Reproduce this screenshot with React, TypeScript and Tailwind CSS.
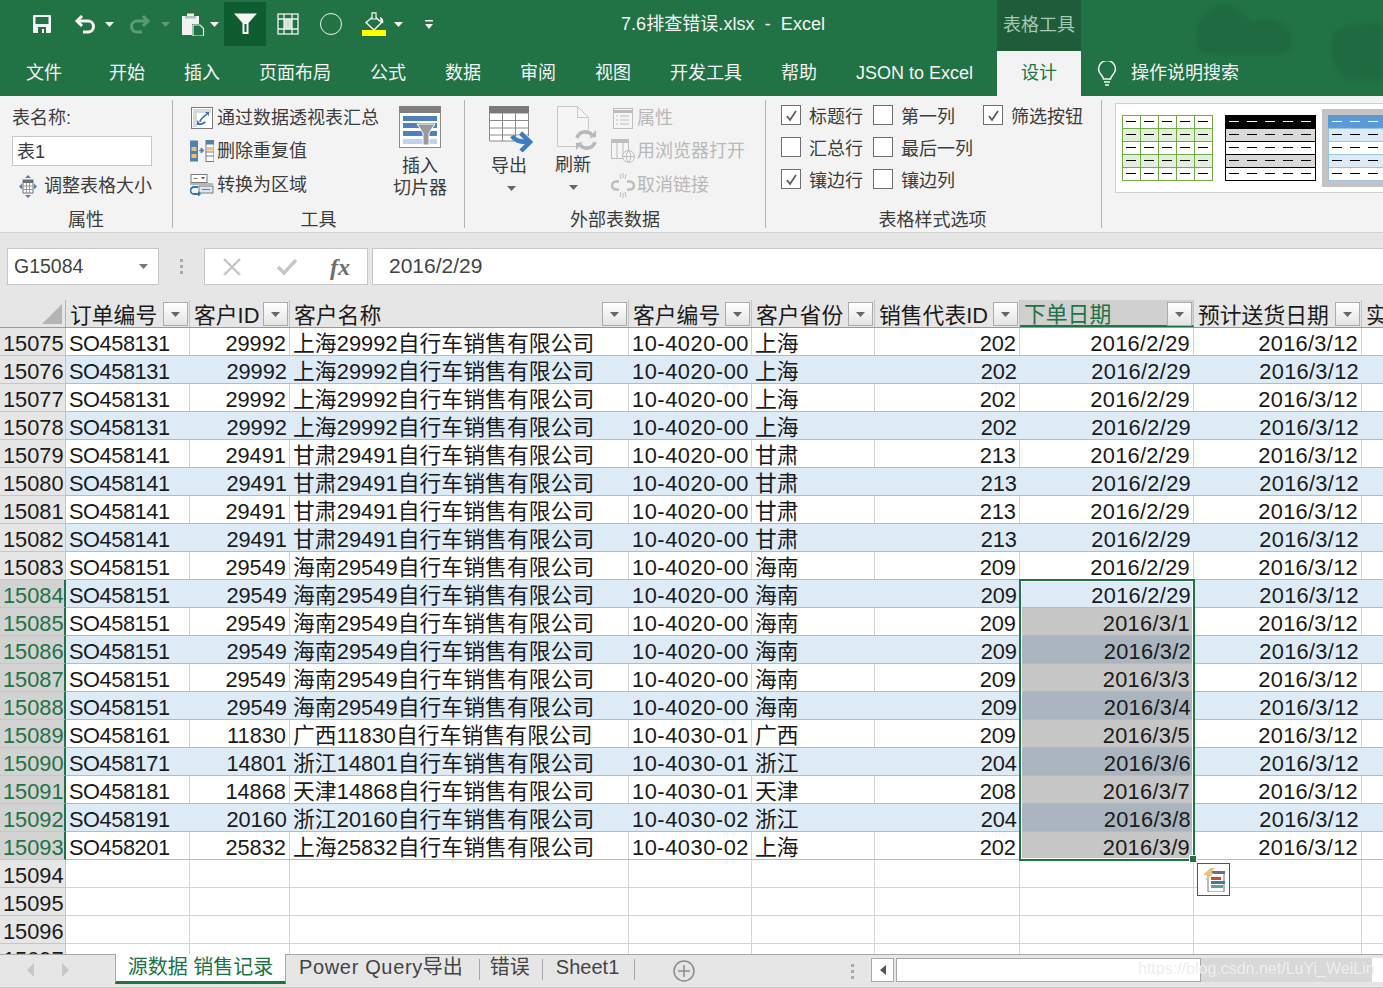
import React from 'react';

const FONT = "font-['Liberation_Sans','Noto_Sans_CJK_SC',sans-serif]";

type Row = { n: number; so: string; id: string; name: string; code: string; prov: string; rep: string; date: string };

const base: [number, string, string, string, string, string, string][] = [
  [4, 'SO458131', '29992', '上海29992自行车销售有限公司', '10-4020-00', '上海', '202'],
  [4, 'SO458141', '29491', '甘肃29491自行车销售有限公司', '10-4020-00', '甘肃', '213'],
  [6, 'SO458151', '29549', '海南29549自行车销售有限公司', '10-4020-00', '海南', '209'],
  [1, 'SO458161', '11830', '广西11830自行车销售有限公司', '10-4030-01', '广西', '209'],
  [1, 'SO458171', '14801', '浙江14801自行车销售有限公司', '10-4030-01', '浙江', '204'],
  [1, 'SO458181', '14868', '天津14868自行车销售有限公司', '10-4030-01', '天津', '208'],
  [1, 'SO458191', '20160', '浙江20160自行车销售有限公司', '10-4030-02', '浙江', '204'],
  [1, 'SO458201', '25832', '上海25832自行车销售有限公司', '10-4030-02', '上海', '202'],
];

const rows: Row[] = [];
base.forEach(([count, so, id, name, code, prov, rep]) => {
  for (let i = 0; i < count; i++) {
    const n = 15075 + rows.length;
    rows.push({ n, so, id, name, code, prov, rep, date: n <= 15084 ? '2016/2/29' : `2016/3/${n - 15084}` });
  }
});

const tabs = ['文件', '开始', '插入', '页面布局', '公式', '数据', '审阅', '视图', '开发工具', '帮助', 'JSON to Excel'];

const Caret = ({ className = '' }: { className?: string }) => (
  <svg width="9" height="5" viewBox="0 0 9 5" className={`shrink-0 ${className}`}>
    <path d="M0 0h9L4.500 5z" fill="currentColor" />
  </svg>
);

const SaveIcon = () => (
  <svg width="20" height="20" viewBox="0 0 20 20" className="block">
    <path d="M1 2a1 1 0 0 1 1-1h16a1 1 0 0 1 1 1v16a1 1 0 0 1-1 1H2a1 1 0 0 1-1-1z" fill="#f5f5f5" />
    <rect x="3.500" y="3" width="13" height="7" fill="#217346" />
    <path d="M6 13h8v6h-2v-4h-2v4H6z" fill="#217346" />
  </svg>
);

const UndoIcon = ({ color = '#f5f5f5', flip = false }: { color?: string; flip?: boolean }) => (
  <svg width="22" height="22" viewBox="0 0 22 22" fill="none" stroke={color} strokeWidth="3" className={flip ? 'block -scale-x-100' : 'block'}>
    <path d="M8 3 3 8l5 5" />
    <path d="M3 8h11a5.500 5.500 0 0 1 0 11h-5" />
  </svg>
);

const PasteIcon = () => (
  <svg width="24" height="24" viewBox="0 0 24 24" className="block">
    <path d="M1 4h5V1.500h7V4h5v8h-7v11H1z" fill="#f2f2f2" />
    <path d="M4 4h11v2.500H4z" fill="#217346" opacity=".35" />
    <path d="M12 13h7l3.500 3.500V24H12z" fill="#217346" stroke="#f2f2f2" strokeWidth="1.200" />
  </svg>
);

const FilterIcon = () => (
  <svg width="23" height="22" viewBox="0 0 23 22" fill="none" className="block">
    <path d="M0 0.500h23L14.500 10v11h-6V10z" fill="#f5f5f5" />
    <path d="M10.500 11h2v8h-2z" fill="#0f5c30" />
  </svg>
);

const FormIcon = () => (
  <svg width="22" height="22" viewBox="0 0 22 22" fill="none" stroke="#f2f2f2" strokeWidth="1.300" className="block">
    <rect x="1" y="1" width="20" height="20" />
    <path d="M1 6h20M1 16h20M7 1v20M15 1v20" />
    <path d="M7 6h8v10H7z" fill="#f2f2f2" stroke="none" opacity=".85" />
  </svg>
);

const FillIcon = () => (
  <svg width="24" height="20" viewBox="0 0 24 20" fill="none" className="block">
    <path d="M4 10.500 12 4l7.500 6.500-7.500 7.500z" stroke="#f5f5f5" strokeWidth="1.400" />
    <path d="M10 .800h4V7h-4z" fill="#217346" stroke="#f5f5f5" strokeWidth="1.200" />
    <path d="M18 5c2.500 1 4 3 3 6.500l-2.500-2.500z" fill="#f5f5f5" />
  </svg>
);

const Option = ({ label, checked = false }: { label: string; checked?: boolean }) => (
  <div className="flex h-5 items-center gap-[8px] whitespace-nowrap">
    {checked ? (
      <span className="flex h-5 w-5 shrink-0 items-center justify-center border border-[#6e6e6e] bg-white">
        <svg width="13" height="13" viewBox="0 0 13 13" fill="none" stroke="#5a5a5a" strokeWidth="1.700">
          <path d="M2 7l3 4 6-9" />
        </svg>
      </span>
    ) : (
      <span className="h-5 w-5 shrink-0 border border-[#6e6e6e] bg-white" />
    )}
    <span className="mt-[3px]">{label}</span>
  </div>
);

const PivotIcon = () => (
  <svg width="22" height="22" viewBox="0 0 22 22" fill="none" className="ml-[1px]">
    <rect x="0.500" y="0.500" width="21" height="21" fill="#fff" stroke="#7a7a7a" />
    <path d="M2 2h18v4H2zM2 6h4v14H2z" fill="#d9d9d9" />
    <path d="M9 15c0-3 3-5 7-8M6.500 16c2 2 5 1 8-1" stroke="#2f75b5" strokeWidth="1.600" />
    <path d="M14 5h4v4zM6 13v5h4z" fill="#2f75b5" />
  </svg>
);

const DedupeIcon = () => (
  <svg width="24" height="22" viewBox="0 0 24 22">
    <rect x="0" y="0.500" width="8" height="21" fill="#4f81b5" />
    <rect x="1.500" y="7" width="5" height="4" fill="#eac27d" />
    <rect x="1.500" y="14" width="5" height="4" fill="#eac27d" />
    <rect x="16" y="0.500" width="8" height="21" fill="#fff" stroke="#7a7a7a" />
    <rect x="16" y="0.500" width="8" height="4" fill="#4f81b5" />
    <rect x="17" y="7" width="6" height="3.500" fill="#eac27d" />
    <path d="M16 12h8M16 16h8" stroke="#7a7a7a" />
    <path d="M9 10.500h4M11 8l3 2.500-3 2.500z" stroke="#4f81b5" fill="#4f81b5" />
  </svg>
);

const ConvertIcon = () => (
  <svg width="24" height="22" viewBox="0 0 24 22" fill="none">
    <rect x="1" y="0.500" width="16" height="8" fill="#fff" stroke="#7a7a7a" />
    <path d="M3.500 4.500h4" stroke="#7a7a7a" />
    <path d="M11 3h4l-2 2.500z" fill="#555" />
    <path d="M0 10h23" stroke="#7a7a7a" />
    <rect x="9" y="12" width="14" height="7" fill="#dce6f1" stroke="#7a7a7a" />
    <path d="M12 15.500h8" stroke="#7a7a7a" />
    <path d="M8 13H4a3.500 3.500 0 0 0 0 7h5" stroke="#2f75b5" strokeWidth="1.800" />
    <path d="M8 17v6l3-3z" fill="#2f75b5" />
  </svg>
);

const ResizeIcon = () => (
  <svg width="18" height="23" viewBox="0 0 18 23" fill="none">
    <path d="M9 0l3 3H6zM9 23l-3-3h6zM0 11.500l3-3v6zM18 11.500l-3 3v-6z" fill="#4f81b5" />
    <rect x="4" y="5" width="10" height="13" fill="#fff" stroke="#6e6e6e" />
    <path d="M4 5h10v3H4z" fill="#6e6e6e" />
    <path d="M4 11h10M4 14.500h10M7.500 8v10M10.500 8v10" stroke="#9a9a9a" />
  </svg>
);

const SlicerIcon = () => (
  <svg width="42" height="42" viewBox="0 0 42 42" className="block">
    <rect x="0.500" y="0.500" width="41" height="41" fill="#fff" stroke="#8a8a8a" />
    <rect x="0" y="0" width="42" height="7" fill="#7f7f7f" />
    <rect x="4" y="10" width="34" height="5" fill="#4f81bd" />
    <rect x="4" y="17" width="34" height="5" fill="#4f81bd" />
    <rect x="4" y="25" width="34" height="5" fill="#4f81bd" />
    <rect x="4" y="33" width="34" height="5" fill="#c2d3e8" />
    <path d="M18 18h18l-6 9v12h-6V27z" fill="#9a9a9a" stroke="#fff" />
  </svg>
);

const ExportIcon = () => (
  <svg width="44" height="46" viewBox="0 0 44 46" fill="none" className="block">
    <path d="M.500 7h39v28H.500zM.500 14.500h39M.500 22h39M.500 29h39M13.500 7v28M26.500 7v28" stroke="#8a8a8a" fill="#fff" />
    <path d="M0 0h40v7H0z" fill="#7a7a7a" />
    <path d="M31 28c3 4 6 6 10 8-4 2-7 5-9 8" stroke="#f3f3f3" strokeWidth="8" />
    <path d="M31.500 27 41 36l-9 9" stroke="#3d7ebf" strokeWidth="4.500" />
    <path d="M23 30c3 5 9 6 16 6" stroke="#3d7ebf" strokeWidth="4.500" />
  </svg>
);

const RefreshIcon = () => (
  <svg width="40" height="45" viewBox="0 0 40 45" fill="none" className="block">
    <path d="M.500 .500h20l11 11v29H.500z" fill="#f5f5f5" stroke="#c8c8c8" />
    <path d="M20.500 .500v11h11" stroke="#c8c8c8" />
    <circle cx="29" cy="34" r="11" fill="#f3f3f3" />
    <path d="M20 32c2-7 11-8 15-3M38 36c-2 7-11 8-15 3" stroke="#b9b9b9" strokeWidth="3.600" />
    <path d="M32 32l7-1v-7zM26 36l-7 1v7z" fill="#b9b9b9" />
  </svg>
);

const PropsIcon = () => (
  <svg width="20" height="21" viewBox="0 0 20 21" fill="none" stroke="#bdbdbd">
    <rect x="0.500" y="0.500" width="19" height="20" fill="#f5f5f5" />
    <path d="M0 3.500h20" strokeWidth="3" />
    <path d="M3 8h2M3 12h2M3 16h2M7 8h9M7 12h9M7 16h9" />
  </svg>
);

const BrowserIcon = () => (
  <svg width="24" height="24" viewBox="0 0 24 24" fill="none" stroke="#bdbdbd">
    <path d="M.500 .500h17v19H.500z" fill="#f5f5f5" />
    <path d="M0 2.500h18" strokeWidth="3" />
    <path d="M6 4v15M12 4v15" />
    <circle cx="17.500" cy="17.500" r="6" fill="#f5f5f5" />
    <path d="M11.500 17.500h12M17.500 11.500c-3 4-3 8 0 12M17.500 11.500c3 4 3 8 0 12" />
  </svg>
);

const UnlinkIcon = () => (
  <svg width="24" height="25" viewBox="0 0 24 25" fill="none" stroke="#bdbdbd">
    <path d="M8 8.500H5a4 4 0 0 0 0 8h3M16 8.500h3a4 4 0 0 1 0 8h-3" strokeWidth="2.400" />
    <path d="M9 1l1 5M15 1l-1 5M12 0v5M9 24l1-5M15 24l-1-5M12 25v-5" />
  </svg>
);

const StyleThumb = ({ kind }: { kind: 'green' | 'black' | 'blue' }) => {
  const line = kind === 'green' ? '#70ad47' : kind === 'black' ? '#000' : '#9bc2e6';
  const band = kind === 'green' ? '#e2efda' : kind === 'black' ? '#d9d9d9' : '#ddebf7';
  return (
    <svg width="91" height="66" viewBox="0 0 91 66" className="block shrink-0">
      <rect x="0.500" y="0.500" width="90" height="65" fill="#fff" stroke={line} />
      {kind !== 'green' && <rect x="0" y="0" width="91" height="13.500" fill={kind === 'black' ? '#000' : '#5b9bd5'} />}
      <rect x="1" y="14" width="89" height="13" fill={band} />
      <rect x="1" y="40" width="89" height="13" fill={band} />
      {[13.500, 26.500, 39.500, 52.500].map((y) => (
        <path key={y} d={`M0 ${y}h91`} stroke={line} />
      ))}
      {kind === 'green' && [18.500, 36.500, 54.500, 72.500].map((x) => <path key={x} d={`M${x} 0v66`} stroke={line} />)}
      {[0, 1, 2, 3, 4].map((r) =>
        [4, 22, 40, 58, 76].map((x) => (
          <path key={`${r}-${x}`} d={`M${x} ${6.500 + r * 13}h10`} stroke={r === 0 && kind !== 'green' ? '#fff' : '#000'} />
        ))
      )}
    </svg>
  );
};

const HeadCell = ({ label, w, active = false }: { label: string; w: string; active?: boolean }) => (
  <div
    className={`relative flex h-full shrink-0 items-center border-r border-[#c4c4c4] pl-[4px] ${w} ${
      active ? 'border-b-2 border-b-[#217346] bg-[#d0d0d0] text-[#217346]' : ''
    }`}
  >
    <span className="mt-[4px] whitespace-nowrap">{label}</span>
    <span className="absolute right-[1px] top-[2px] flex h-[24px] w-[25px] items-center justify-center border border-[#ababab] bg-gradient-to-b from-white to-[#e4e4e4] text-[#666]">
      <Caret />
    </span>
  </div>
);

const Cell = ({ w, children, right = false, plain, extra = '' }: { w: string; children?: React.ReactNode; right?: boolean; plain: boolean; extra?: string }) => (
  <div
    className={`h-full shrink-0 overflow-hidden whitespace-nowrap ${w} ${right ? 'pr-[3px] text-right' : 'pl-[3px]'} ${
      plain ? 'border-r border-[#d4d4d4]' : ''
    } ${extra}`}
  >
    {children}
  </div>
);

export default function App() {
  return (
    <div className={`h-[988px] w-[1383px] overflow-hidden bg-[#e6e6e6] ${FONT}`}>
      <div className="relative overflow-hidden bg-[#217346]">
        {/* background art of the title bar */}
        <svg width="300" height="80" viewBox="0 0 300 80" className="absolute left-[1083px] top-0 blur-[2px]" fill="#1f6a40">
          <path d="M118 52c-14-28 8-50 28-46 12 3 18 12 24 16 20-8 36 0 38 20 1 6-3 10-8 12h-72z" />
          <path d="M250 38c4-14 24-16 50-14v56h-36c-10-8-20-24-14-42z" />
        </svg>

        {/* title bar */}
        <div className="relative flex h-[51px] items-start text-white">
          <div className="flex h-[46px] w-[620px] shrink-0 items-center pt-[2px]">
            <span className="ml-[32px]"><SaveIcon /></span>
            <span className="ml-[22px]"><UndoIcon /></span>
            <Caret className="ml-[9px] text-[#f2f2f2]" />
            <span className="ml-[15px]"><UndoIcon color="#5d9a78" flip /></span>
            <Caret className="ml-[10px] text-[#5d9a78]" />
            <span className="ml-[11px]"><PasteIcon /></span>
            <Caret className="ml-[5px] text-[#f2f2f2]" />
            <span className="ml-[5px] flex h-[44px] w-[42px] shrink-0 items-center justify-center bg-[#0f5c30]"><FilterIcon /></span>
            <span className="ml-[11px]"><FormIcon /></span>
            <span className="ml-[21px] h-[22px] w-[22px] shrink-0 rounded-full border border-[#eeeeee]" />
            <span className="ml-[20px] flex w-[24px] shrink-0 flex-col items-center">
              <FillIcon />
              <span className="-mt-[2px] h-[6px] w-[24px] bg-[#ffff00]" />
            </span>
            <Caret className="ml-[8px] text-[#f2f2f2]" />
            <svg width="8" height="9" viewBox="0 0 8 9" className="ml-[22px] shrink-0" fill="#f2f2f2">
              <path d="M0 0h8v1.500H0zM0 4h8L4 9z" />
            </svg>
          </div>
          <div className="flex h-[48px] w-[377px] shrink-0 items-center whitespace-pre pl-[1px] text-[18px] tracking-[0.05px] text-[#f4f4f4]">7.6排查错误.xlsx  -  Excel</div>
          <div className="flex h-[51px] w-[84px] shrink-0 items-center justify-center bg-[#1e5c3a] text-[18px] text-[#a3c9b3]">表格工具</div>
        </div>

        {/* ribbon tabs */}
        <div className="relative flex h-[45px] items-center pl-[26px] text-[18px] text-[#f4f4f4]">
          {tabs.map((t, i) => (
            <span key={t} className={`whitespace-nowrap ${i === 0 ? '' : i === 1 ? 'ml-[47px]' : 'ml-[39px]'}`}>
              {t}
            </span>
          ))}
          <span className="ml-[24px] flex h-full w-[84px] items-center justify-center bg-[#f3f3f3] text-[#217346]">设计</span>
          <svg width="20" height="26" viewBox="0 0 20 26" fill="none" stroke="#f4f4f4" strokeWidth="1.500" className="ml-[16px]">
            <path d="M6.500 18c0-3-5-5-5-10a8.500 8.500 0 0 1 17 0c0 5-5 7-5 10zM7 21h6M8 24h4" />
          </svg>
          <span className="ml-[14px] whitespace-nowrap">操作说明搜索</span>
        </div>
      </div>

      {/* ribbon */}
      <div className="flex h-[137px] border-b border-[#d2d2d2] bg-[#f3f3f3] pt-[4px] text-[18px] text-[#3c3c3c]">
        {/* 属性 */}
        <div className="h-[128px] w-[173px] shrink-0 border-r border-[#b4b4b4] pl-[12px]">
          <div className="h-[36px] pt-[5px]">表名称:</div>
          <div className="h-[30px] w-[140px] border border-[#c6c6c6] bg-white pl-[4px] leading-[30px]">表1</div>
          <div className="mt-[8px] flex h-[24px] items-center pl-[7px]">
            <ResizeIcon />
            <span className="ml-[7px] whitespace-nowrap">调整表格大小</span>
          </div>
          <div className="mt-[12px] -ml-[12px] w-[172px] text-center leading-[20px]">属性</div>
        </div>

        {/* 工具 */}
        <div className="h-[128px] w-[292px] shrink-0 border-r border-[#b4b4b4]">
          <div className="flex h-[100px]">
            <div className="flex w-[220px] flex-col pl-[17px]">
              <div className="mt-[6px] flex h-[24px] items-center whitespace-nowrap"><span className="w-[27px]"><PivotIcon /></span>通过数据透视表汇总</div>
              <div className="mt-[9px] flex h-[24px] items-center whitespace-nowrap"><span className="w-[27px]"><DedupeIcon /></span>删除重复值</div>
              <div className="mt-[10px] flex h-[24px] items-center whitespace-nowrap"><span className="w-[27px]"><ConvertIcon /></span>转换为区域</div>
            </div>
            <div className="flex flex-col items-center pt-[6px] leading-[22px]">
              <SlicerIcon />
              <span className="mt-[7px]">插入</span>
              <span className="whitespace-nowrap">切片器</span>
            </div>
          </div>
          <div className="mt-[10px] text-center leading-[20px]">工具</div>
        </div>

        {/* 外部表数据 */}
        <div className="h-[128px] w-[301px] shrink-0 border-r border-[#b4b4b4]">
          <div className="flex h-[100px]">
            <div className="flex w-[88px] shrink-0 flex-col items-center pl-[4px] pt-[6px]">
              <ExportIcon />
              <span className="mt-[3px] -ml-[4px] whitespace-nowrap leading-[22px]">导出</span>
              <Caret className="mt-[9px] text-[#666]" />
            </div>
            <div className="flex w-[40px] shrink-0 flex-col items-center pt-[6px]">
              <span className="ml-[8px]"><RefreshIcon /></span>
              <span className="mt-[3px] whitespace-nowrap leading-[22px]">刷新</span>
              <Caret className="mt-[9px] text-[#666]" />
            </div>
            <div className="ml-[18px] flex flex-col text-[#b8b8b8]">
              <div className="mt-[6px] flex h-[24px] items-center gap-[4px] whitespace-nowrap pl-[2px]"><PropsIcon />属性</div>
              <div className="mt-[9px] flex h-[24px] items-center gap-[2px] whitespace-nowrap"><BrowserIcon />用浏览器打开</div>
              <div className="mt-[10px] flex h-[24px] items-center gap-[2px] whitespace-nowrap"><UnlinkIcon />取消链接</div>
            </div>
          </div>
          <div className="mt-[10px] text-center leading-[20px]">外部表数据</div>
        </div>

        {/* 表格样式选项 */}
        <div className="h-[128px] w-[336px] shrink-0 border-r border-[#b4b4b4]">
          <div className="flex h-[100px] pl-[15px] pt-[5px] leading-[20px]">
            <div className="flex w-[92px] flex-col gap-[12px]">
              <Option label="标题行" checked />
              <Option label="汇总行" />
              <Option label="镶边行" checked />
            </div>
            <div className="flex w-[110px] flex-col gap-[12px]">
              <Option label="第一列" />
              <Option label="最后一列" />
              <Option label="镶边列" />
            </div>
            <Option label="筛选按钮" checked />
          </div>
          <div className="mt-[10px] pr-[2px] text-center leading-[20px]">表格样式选项</div>
        </div>

        {/* gallery */}
        <div className="ml-[13px] mt-[3px] flex h-[90px] grow items-center border border-r-0 border-[#d0d0d0] bg-white pl-[6px]">
          <StyleThumb kind="green" />
          <span className="ml-[12px]"><StyleThumb kind="black" /></span>
          <span className="ml-[6px] flex h-[78px] grow items-center overflow-hidden bg-[#c4c4c4] pl-[6px]"><StyleThumb kind="blue" /></span>
        </div>
      </div>

      {/* formula bar */}
      <div className="mt-[15px] flex h-[37px] text-[#444]">
        <div className="ml-[7px] flex w-[152px] items-center justify-between border border-[#c6c6c6] bg-white pl-[6px] pr-[10px] text-[19.5px]">
          G15084
          <Caret className="text-[#777]" />
        </div>
        <div className="flex w-[45px] flex-col items-center justify-center gap-[3px]">
          <span className="h-[3px] w-[3px] bg-[#a8a8a8]" />
          <span className="h-[3px] w-[3px] bg-[#a8a8a8]" />
          <span className="h-[3px] w-[3px] bg-[#a8a8a8]" />
        </div>
        <div className="flex w-[164px] items-center border border-[#c6c6c6] bg-white">
          <svg width="18" height="18" viewBox="0 0 18 18" className="ml-[18px]" stroke="#c6c6c6" strokeWidth="2.400"><path d="M1 1l16 16M17 1 1 17" /></svg>
          <svg width="20" height="16" viewBox="0 0 20 16" className="ml-[36px]" fill="none" stroke="#c6c6c6" strokeWidth="3.500"><path d="M1 8l6 6L19 1" /></svg>
          <span className="ml-[33px] font-['Liberation_Serif',serif] text-[24px] font-bold italic text-[#6e6e6e]">fx</span>
        </div>
        <div className="ml-[4px] flex grow items-center border border-r-0 border-[#c6c6c6] bg-white pb-[1px] pl-[16px] text-[21px]">2016/2/29</div>
      </div>

      {/* grid */}
      <div className="relative mt-[15px] h-[654px] overflow-hidden text-[21.8px] leading-[32px] text-[#1a1a1a]">
        <div className="flex h-[28px] border-b border-[#9a9a9a]">
          <div className="relative h-full w-[66px] shrink-0 border-r border-[#b4b4b4]">
            <svg width="20" height="20" viewBox="0 0 20 20" className="absolute right-[3px] top-[4px]"><path d="M20 0v20H0z" fill="#b4b4b4" /></svg>
          </div>
          <HeadCell label="订单编号" w="w-[124px]" />
          <HeadCell label="客户ID" w="w-[100px]" />
          <HeadCell label="客户名称" w="w-[339px]" />
          <HeadCell label="客户编号" w="w-[123px]" />
          <HeadCell label="客户省份" w="w-[123px]" />
          <HeadCell label="销售代表ID" w="w-[145px]" />
          <HeadCell label="下单日期" w="w-[174px]" active />
          <HeadCell label="预计送货日期" w="w-[168px]" />
          <div className="shrink-0 whitespace-nowrap pl-[4px] leading-[28px]"><span className="relative top-[2px]">实</span></div>
        </div>

        {rows.map((r) => {
          const plain = r.n % 2 === 1;
          const sel = r.n >= 15084;
          const gray = r.n >= 15085;
          return (
            <div key={r.n} className="flex h-[28px]">
              <div
                className={`h-full w-[66px] shrink-0 overflow-hidden border-b border-[#c6c6c6] pl-[3px] ${
                  sel ? 'border-r-2 border-r-[#217346] bg-[#d2d2d2] text-[#217346]' : 'border-r border-r-[#c6c6c6] bg-[#e6e6e6]'
                }`}
              >
                {r.n}
              </div>
              <div className={`flex h-full grow border-b border-[#9bc2e6] ${plain ? 'bg-white' : 'bg-[#ddebf7]'}`}>
                <Cell w="w-[124px]" plain={plain} extra="tracking-[-0.45px]">{r.so}</Cell>
                <Cell w="w-[100px]" right plain={plain}>{r.id}</Cell>
                <Cell w="w-[339px]" plain={plain} extra="tracking-[0.06px]">{r.name}</Cell>
                <Cell w="w-[123px]" plain={plain} extra="tracking-[0.55px]">{r.code}</Cell>
                <Cell w="w-[123px]" plain={plain}>{r.prov}</Cell>
                <Cell w="w-[145px]" right plain={plain}>{r.rep}</Cell>
                <Cell w="w-[174px]" right plain={plain} extra={`tracking-[0.3px] ${gray ? (plain ? 'bg-[#c6c6c6]' : 'bg-[#aab5bf]') : ''}`}>{r.date}</Cell>
                <Cell w="w-[168px]" right plain={plain} extra="tracking-[0.3px]">2016/3/12</Cell>
              </div>
            </div>
          );
        })}

        {[15094, 15095, 15096, 15097].map((n) => (
          <div key={n} className="flex h-[28px]">
            <div className="h-full w-[66px] shrink-0 overflow-hidden border-b border-r border-[#c6c6c6] bg-[#e6e6e6] pl-[3px]">{n}</div>
            <div className="flex h-full grow border-b border-[#d4d4d4] bg-white">
              <Cell w="w-[124px]" plain />
              <Cell w="w-[100px]" plain />
              <Cell w="w-[339px]" plain />
              <Cell w="w-[123px]" plain />
              <Cell w="w-[123px]" plain />
              <Cell w="w-[145px]" plain />
              <Cell w="w-[174px]" plain />
              <Cell w="w-[168px]" plain />
            </div>
          </div>
        ))}

        {/* selection frame */}
        <div className="absolute left-[1019px] top-[279px] h-[282px] w-[176px] border-2 border-[#217346] shadow-[inset_0_0_0_1px_white]" />
        <div className="absolute left-[1189px] top-[555px] h-[8px] w-[8px] border border-white bg-[#217346]" />
        <div className="absolute left-[1197px] top-[563px] flex h-[33px] w-[33px] items-center justify-center border border-[#217346] bg-white">
          <svg width="24" height="24" viewBox="0 0 24 24">
            <path d="M6 4h16v20H6z" fill="#fff" stroke="#777" />
            <path d="M10 3h13v3H10z" fill="#707070" />
            <path d="M9 9h10v3H9z" fill="#d24726" />
            <path d="M9 13h14v3H9z" fill="#3f78b5" />
            <path d="M9 17h12v3H9z" fill="#5aa38e" />
            <path d="M8 0h5L8 5h4L3 13l3-6H1z" fill="#eec17f" />
          </svg>
        </div>
      </div>

      {/* sheet tabs */}
      <div className="relative h-[34px] border-t border-b border-t-[#a8a8a8] border-b-[#c6c6c6] bg-[#e6e6e6] text-[20px] text-[#444]">
        <div className="flex h-[29px] items-stretch">
          <div className="flex w-[115px] shrink-0 items-center pl-[27px]">
            <svg width="7" height="14" viewBox="0 0 7 14" fill="#c6c6c6"><path d="M7 0v14L0 7z" /></svg>
            <svg width="7" height="14" viewBox="0 0 7 14" fill="#c6c6c6" className="ml-[28px]"><path d="M0 0v14l7-7z" /></svg>
          </div>
          <div className="-mt-px flex w-[171px] shrink-0 items-center justify-center whitespace-nowrap border-x border-b-[3px] border-[#a8a8a8] border-b-[#217346] bg-white pb-[2px] text-[#217346]">源数据 销售记录</div>
          <div className="flex items-center whitespace-nowrap pb-[5px] pl-[13px]"><span className="tracking-[0.65px]">Power Query</span>导出</div>
          <span className="my-[4px] ml-[16px] w-px bg-[#a8a8a8]" />
          <div className="flex items-center whitespace-nowrap pb-[5px] pl-[10px]">错误</div>
          <span className="my-[4px] ml-[12px] w-px bg-[#a8a8a8]" />
          <div className="flex items-center whitespace-nowrap pb-[5px] pl-[13px]">Sheet1</div>
          <span className="my-[4px] ml-[15px] w-px bg-[#a8a8a8]" />
          <div className="ml-[38px] flex items-center pt-[3px]">
            <svg width="22" height="22" viewBox="0 0 22 22" fill="none" stroke="#8a8a8a" strokeWidth="1.500"><circle cx="11" cy="11" r="10" /><path d="M5 11h12M11 5v12" /></svg>
          </div>
          <div className="ml-[156px] flex flex-col items-center justify-center gap-[3px] pt-[3px]">
            <span className="h-[3px] w-[3px] bg-[#a8a8a8]" />
            <span className="h-[3px] w-[3px] bg-[#a8a8a8]" />
            <span className="h-[3px] w-[3px] bg-[#a8a8a8]" />
          </div>
          <div className="ml-[17px] mt-[3px] flex h-[24px] grow">
            <div className="flex w-[23px] items-center justify-center border border-[#a8a8a8] bg-white">
              <svg width="6" height="10" viewBox="0 0 6 10" fill="#555"><path d="M6 0v10L0 5z" /></svg>
            </div>
            <div className="ml-[2px] w-[305px] border border-[#a8a8a8] bg-white" />
            <div className="w-[171px] bg-[#d8d8d8]" />
            <div className="grow bg-white" />
          </div>
        </div>
        <div className="absolute left-[1138px] top-[2px] whitespace-nowrap text-[16px] text-[#eeeeee]">https://blog.csdn.net/LuYi_WeiLin</div>
      </div>
    </div>
  );
}
